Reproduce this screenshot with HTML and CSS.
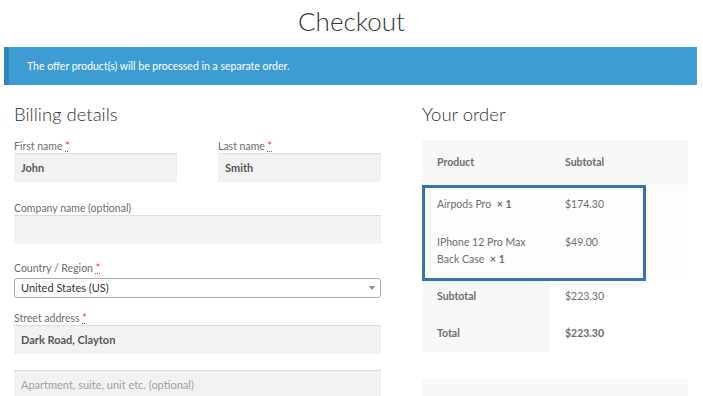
FILE: index.html
```html
<!DOCTYPE html>
<html lang="en">
<head>
    <meta charset="UTF-8">
    <meta name="viewport" content="width=device-width, initial-scale=1.0">
    <title>Checkout</title>
    <link rel="stylesheet" href="styles.css">
</head>
<body>
    <h1 class="page-title">Checkout</h1>
    <div class="notice">The offer product(s) will be processed in a separate order.</div>

    <div class="checkout">
        <div class="billing">
            <h3>Billing details</h3>
            <div class="row-split">
                <div class="field">
                    <label>First name <abbr class="required">*</abbr></label>
                    <div class="input">John</div>
                </div>
                <div class="field">
                    <label>Last name <abbr class="required">*</abbr></label>
                    <div class="input">Smith</div>
                </div>
            </div>
            <div class="field company">
                <label>Company name (optional)</label>
                <div class="input"></div>
            </div>
            <div class="field country">
                <label>Country / Region <abbr class="required">*</abbr></label>
                <div class="select">United States (US)<span class="arrow"></span></div>
            </div>
            <div class="field street">
                <label>Street address <abbr class="required">*</abbr></label>
                <div class="input">Dark Road, Clayton</div>
                <div class="input placeholder">Apartment, suite, unit etc. (optional)</div>
            </div>
        </div>

        <div class="order">
            <h3>Your order</h3>
            <div class="order-table">
                <table>
                    <thead>
                        <tr><th>Product</th><th>Subtotal</th></tr>
                    </thead>
                    <tbody>
                        <tr class="item one">
                            <td>Airpods Pro <strong class="qty">&times; 1</strong></td>
                            <td>$174.30</td>
                        </tr>
                        <tr class="item two">
                            <td>IPhone 12 Pro Max<br>Back Case <strong class="qty">&times; 1</strong></td>
                            <td>$49.00</td>
                        </tr>
                    </tbody>
                    <tfoot>
                        <tr><th>Subtotal</th><td>$223.30</td></tr>
                        <tr><th>Total</th><td><strong>$223.30</strong></td></tr>
                    </tfoot>
                </table>
                <div class="highlight"></div>
            </div>
            <div class="payment"></div>
        </div>
    </div>
</body>
</html>
```

FILE: styles.css
```css
body {
    margin: 0;
    font-family: Lato, "Open Sans", sans-serif;
    color: #6d6d6d;
    background-color: #fff;
    overflow: hidden;
}
.page-title {
    margin: 0;
    padding-top: 3px;
    font-size: 26px;
    font-weight: 300;
    line-height: 36px;
    color: #333;
    text-align: center;
}
.notice {
    margin: 8px 6px 0 4px;
    height: 38px;
    line-height: 38px;
    padding-left: 18px;
    background-color: #3d9cd2;
    border-left: 5px solid #3185bb;
    color: #fff;
    font-size: 10.5px;
}
.checkout {
    display: flex;
    gap: 41px;
    padding: 0 15px 0 14px;
}
.billing {
    width: 367px;
}
.order {
    width: 266px;
}
h3 {
    margin: 17px 0 13px;
    font-size: 18.5px;
    font-weight: 300;
    line-height: 24px;
    color: #333;
}
.order h3 {
    margin-bottom: 12px;
}
.row-split {
    display: flex;
    justify-content: space-between;
}
.row-split .field {
    width: 163px;
}
.field label {
    display: block;
    font-size: 10.5px;
    line-height: 14px;
}
.required {
    color: #e2401c;
    text-decoration: underline dotted;
}
.input {
    height: 29px;
    line-height: 29px;
    padding-left: 7px;
    background-color: #f2f2f2;
    box-shadow: inset 0 1px 1px rgba(0, 0, 0, 0.1);
    font-size: 11px;
    font-weight: 700;
    color: #55575c;
}
.input.placeholder {
    margin-top: 16px;
    font-weight: 400;
    color: #a0a0a0;
}
.company {
    margin-top: 19px;
}
.country {
    margin-top: 17px;
}
.country label {
    margin-bottom: 3px;
}
.select {
    position: relative;
    height: 18px;
    line-height: 18px;
    padding-left: 6px;
    border: 1px solid #aaa;
    border-radius: 3px;
    font-size: 11px;
    color: #333;
}
.arrow {
    position: absolute;
    right: 5px;
    top: 7px;
    border-left: 3px solid transparent;
    border-right: 3px solid transparent;
    border-top: 4px solid #888;
}
.street {
    margin-top: 13px;
}
.order-table {
    position: relative;
    margin-top: 14px;
}
table {
    width: 100%;
    border-collapse: collapse;
    font-size: 10.5px;
}
th, td {
    text-align: left;
    padding: 0 15px;
    vertical-align: top;
}
th:first-child, td:first-child {
    width: 98px;
}
thead th {
    height: 45px;
    line-height: 45px;
    background-color: #f8f8f8;
    font-weight: 700;
}
tbody td {
    background-color: #fdfdfd;
    line-height: 17px;
}
.item.one td {
    height: 38px;
    line-height: 38px;
}
.item.two td {
    height: 44px;
    padding-top: 11px;
}
.qty {
    margin-left: 3px;
}
tfoot th {
    height: 37px;
    line-height: 37px;
    background-color: #f8f8f8;
    font-weight: 700;
}
tfoot td {
    line-height: 37px;
}
.highlight {
    position: absolute;
    left: 0;
    top: 45px;
    width: 224px;
    height: 96px;
    box-sizing: border-box;
    border: 3px solid #3573b6;
}
.payment {
    margin-top: 27px;
    height: 40px;
    background-color: #f8f8f8;
}
```
